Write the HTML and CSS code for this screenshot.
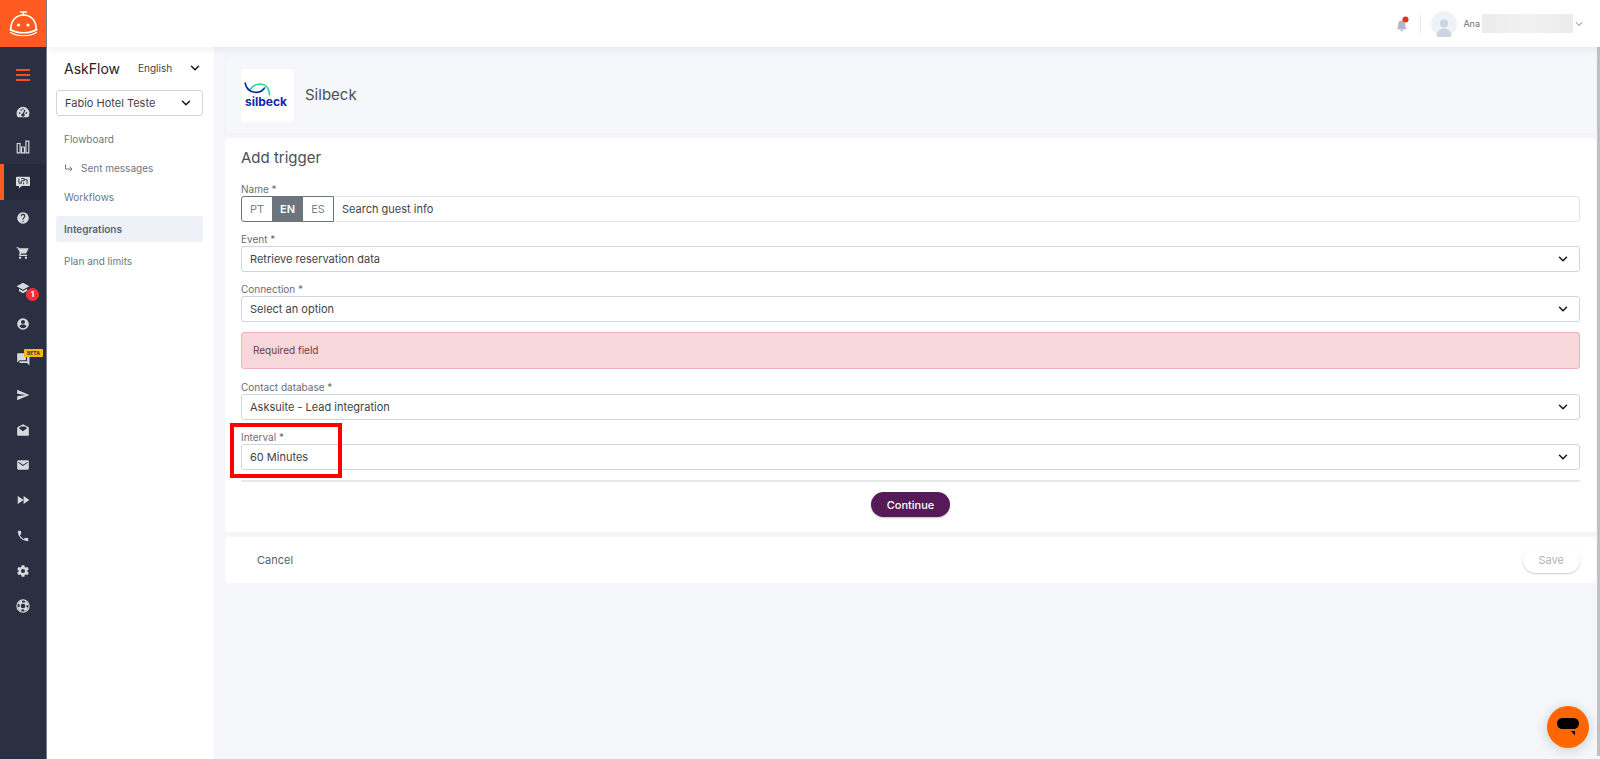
FILE: index.html
```
<!DOCTYPE html>
<html lang="en">

<head>
    <meta charset="UTF-8">
    <meta name="viewport" content="width=device-width, initial-scale=1.0">
    <title>AskFlow</title>
    <link rel="stylesheet" href="styles.css">
</head>

<body>
    <svg class="defs" aria-hidden="true">
        <symbol id="chevron" viewBox="0 0 10 10">
            <path d="M1.5 3.3L5 6.8l3.5-3.5" fill="none" stroke="currentColor" stroke-width="1.5" stroke-linecap="round" stroke-linejoin="round" />
        </symbol>
    </svg>

    <nav class="sidebar" aria-label="Main">
        <a class="brand" href="#" aria-label="Home">
            <svg width="29" height="28" viewBox="0 0 29 28" fill="none" stroke="#fff" stroke-width="1.6" stroke-linecap="round">
                <path d="M11.5 2h6M14.500 2v3" />
                <path d="M1.800 20C1.500 11.500 6.500 5 14.500 5S27.500 11.500 27.200 20" />
                <path d="M1.200 19.500C8 23.800 21 23.800 27.800 19.500" />
                <path d="M1.500 22.500C8 26.800 21 26.800 27.500 22.500" stroke-width="1.200" />
                <circle cx="9.500" cy="15" r="1.600" fill="#fff" stroke="none" />
                <circle cx="19" cy="15" r="1.600" fill="#fff" stroke="none" />
            </svg>
        </a>
        <button class="burger" type="button" aria-label="Menu"><i></i><i></i><i></i></button>
        <ul class="icons">
            <li><a href="#" aria-label="Dashboard"><svg viewBox="0 0 24 24"><path fill-rule="evenodd" d="M12 3A11 11 0 0 0 1 14c0 2.500.8 5 2.200 7h17.600c1.400-2 2.200-4.500 2.200-7A11 11 0 0 0 12 3zM5 12.500h2.500V15H5zM7.500 7.500H10V10H7.500zM11 5.500h2V8h-2zM16.500 12.500H19V15h-2.500zM14.500 7.500l1.800 1-2.500 6.200c1 .8 1.200 1.500 1.200 2.300a3 3 0 1 1-3-3z" /></svg></a></li>
            <li><a href="#" aria-label="Reports"><svg viewBox="0 0 24 24" fill="none" stroke="#d3dbde" stroke-width="2"><path d="M2 6h5v16H2zM9.500 12h5v10h-5zM17 2h5v20h-5z" /></svg></a></li>
            <li class="tall"><a class="on" href="#" aria-label="AskFlow"><svg viewBox="0 0 24 24"><path d="M2 3h20a2 2 0 0 1 2 2v12a2 2 0 0 1-2 2H10l-5 4v-4H2a2 2 0 0 1-2-2V5a2 2 0 0 1 2-2z" /><path d="M5 6v8h5M9 6h5v4H9v4M14 8h5v7M13 13v3" fill="none" stroke="#252a3a" stroke-width="1.500" /></svg></a></li>
            <li><a href="#" aria-label="Help"><svg viewBox="0 0 24 24"><path d="M12 2a10 10 0 1 0 0 20 10 10 0 0 0 0-20zm1 17h-2v-2h2zm2.070-7.750-.9.920C13.450 12.900 13 13.500 13 15h-2v-.5c0-1.100.450-2.100 1.170-2.830l1.240-1.260A2 2 0 1 0 10 9H8a4 4 0 1 1 7.070 2.250z" /></svg></a></li>
            <li><a href="#" aria-label="Cart"><svg viewBox="0 0 24 24"><path d="M7 18a2 2 0 1 0 0 4 2 2 0 0 0 0-4zM1 2v2h2l3.600 7.590-1.350 2.450C4.520 15.370 5.480 17 7 17h12v-2H7.420l1.130-2h7.450c.75 0 1.410-.41 1.750-1.030L21.700 4H5.210l-.94-2zm16 16a2 2 0 1 0 0 4 2 2 0 0 0 0-4z" /></svg></a></li>
            <li class="tall"><a href="#" aria-label="Academy"><svg viewBox="0 0 24 24"><path d="M5 13.180v4L12 21l7-3.820v-4L12 17zM12 3L1 9l11 6 11-6z" /></svg><span class="count">1</span></a></li>
            <li><a href="#" aria-label="Contacts"><svg viewBox="0 0 24 24"><path fill-rule="evenodd" d="M12 2a10 10 0 1 0 0 20 10 10 0 0 0 0-20zm0 3a3.500 3.500 0 1 1 0 7 3.500 3.500 0 0 1 0-7zm0 14.200a7.200 7.200 0 0 1-6-3.220c.03-1.990 4-3.080 6-3.080s5.970 1.090 6 3.080a7.200 7.200 0 0 1-6 3.220z" /></svg></a></li>
            <li class="tall"><a href="#" aria-label="Conversations"><svg viewBox="0 0 24 24"><path d="M21 7h-2v9H6v2c0 .55.45 1 1 1h12l4 4V8c0-.55-.45-1-2-1zm-4 6V3c0-.55-.45-1-1-1H3c-.55 0-1 .45-1 1v15l4-4h10c.55 0 1-.45 1-1z" /></svg><span class="beta">BETA</span></a></li>
            <li><a href="#" aria-label="Campaigns"><svg viewBox="0 0 24 24"><path d="M2 21l21-9L2 3v7l15 2-15 2z" /></svg></a></li>
            <li><a href="#" aria-label="Inbox"><svg viewBox="0 0 24 24"><path fill-rule="evenodd" d="M12 2l9 5a2 2 0 0 1 1 1.700V20a2 2 0 0 1-2 2H4a2 2 0 0 1-2-2V8.700A2 2 0 0 1 3 7zM5 9l7 5 7-5-3.500-3h-7z" /></svg></a></li>
            <li><a href="#" aria-label="Mail"><svg viewBox="0 0 24 24"><path fill-rule="evenodd" d="M4 4h16a2 2 0 0 1 2 2v12a2 2 0 0 1-2 2H4a2 2 0 0 1-2-2V6a2 2 0 0 1 2-2zm0 2.500V8l8 5.500L20 8V6.500l-8 5z" /></svg></a></li>
            <li class="tall"><a href="#" aria-label="Forward"><svg viewBox="0 0 24 24"><path d="M3 5l10 7-10 7zM13 5l10 7-10 7z" /></svg></a></li>
            <li><a href="#" aria-label="Calls"><svg viewBox="0 0 24 24"><path d="M6.620 10.790a15.100 15.100 0 0 0 6.590 6.590l2.200-2.200c.27-.27.67-.36 1.020-.24 1.120.37 2.330.57 3.570.57.55 0 1 .45 1 1V20c0 .55-.45 1-1 1A17 17 0 0 1 3 4c0-.55.45-1 1-1h3.500c.55 0 1 .45 1 1 0 1.250.2 2.450.57 3.570.11.35.03.74-.25 1.020z" /></svg></a></li>
            <li><a href="#" aria-label="Settings"><svg viewBox="0 0 24 24"><path d="M19.430 12.980c.04-.32.07-.64.07-.98s-.03-.66-.07-.98l2.110-1.650c.19-.15.24-.42.12-.64l-2-3.460c-.12-.22-.39-.3-.61-.22l-2.490 1c-.52-.4-1.080-.73-1.690-.98l-.38-2.650A.49.49 0 0 0 14 2h-4c-.25 0-.46.18-.49.42l-.38 2.650c-.61.25-1.170.59-1.690.98l-2.490-1c-.23-.09-.49 0-.61.22l-2 3.460c-.13.22-.07.49.12.64l2.110 1.650c-.04.32-.07.65-.07.98s.03.66.07.98l-2.110 1.650c-.19.15-.24.42-.12.64l2 3.460c.12.22.39.3.61.22l2.490-1c.52.4 1.080.73 1.690.98l.38 2.650c.03.24.24.42.49.42h4c.25 0 .46-.18.49-.42l.38-2.650c.61-.25 1.170-.59 1.690-.98l2.490 1c.23.09.49 0 .61-.22l2-3.460c.12-.22.07-.49-.12-.64zM12 15.500a3.500 3.500 0 1 1 0-7 3.500 3.500 0 0 1 0 7z" /></svg></a></li>
            <li class="tall"><a href="#" aria-label="Support"><svg viewBox="0 0 24 24" fill="none" stroke="#d3dbde"><circle cx="12" cy="12" r="10.500" stroke-width="2" /><circle cx="12" cy="12" r="7.500" stroke-width="4" stroke-dasharray="6.780 5" stroke-dashoffset="9.280" /><circle cx="12" cy="12" r="5" stroke-width="2" /></svg></a></li>
        </ul>
    </nav>

    <div class="page">
        <header class="topbar">
            <button class="bell" type="button" aria-label="Notifications">
                <svg width="14" height="16" viewBox="0 0 14 16">
                    <path d="M6 4.500h1.500c2 .5 2.800 2.200 2.800 4V11l1.200 1.500v.7H2v-.7L3.200 11V8.500c0-1.800.8-3.500 2.800-4zM5.300 13.700h3c0 2-3 2-3 0z" fill="#b5b5c9" />
                    <circle cx="10.500" cy="3.500" r="3" fill="#e63312" />
                </svg>
            </button>
            <span class="line"></span>
            <svg class="avatar" width="26" height="26" viewBox="0 0 26 26">
                <circle cx="13" cy="13" r="13" fill="#eff3f7" />
                <circle cx="13" cy="12.500" r="4" fill="#cbd5e2" />
                <path d="M5.500 25c.5-10 14.500-10 15 0a13 13 0 0 1-15 0z" fill="#cbd5e2" />
            </svg>
            <button class="user" type="button">Ana <span class="hidden-name"></span>
                <svg width="8" height="8"><use href="#chevron" /></svg>
            </button>
        </header>

        <div class="content">
            <aside class="menu">
                <div class="menu-top">
                    <strong class="menu-title">AskFlow</strong>
                    <div class="select lang">
                        <select aria-label="Language"><option>English</option></select>
                        <svg><use href="#chevron" /></svg>
                    </div>
                </div>
                <div class="select hotel">
                    <select aria-label="Hotel"><option>Fabio Hotel Teste</option></select>
                    <svg><use href="#chevron" /></svg>
                </div>
                <ul class="links">
                    <li><a href="#">Flowboard</a></li>
                    <li><a href="#"><svg width="9" height="9" viewBox="0 0 9 9" fill="none" stroke="#6b7885"><path d="M1.500.5v4.500H8M5.800 2.700L8 5 5.800 7.300" /></svg>Sent messages</a></li>
                    <li><a href="#">Workflows</a></li>
                    <li><a class="current" href="#">Integrations</a></li>
                    <li><a href="#">Plan and limits</a></li>
                </ul>
            </aside>

            <main class="main">
                <section class="card app">
                    <div class="app-logo">
                        <svg width="49" height="29" viewBox="-1 0 49 29" fill="none" stroke-linecap="round" role="img" aria-label="silbeck">
                            <path d="M6 8.500C12 .5 25 .5 25.500 14" stroke="#16e09a" stroke-width="1.600" />
                            <path d="M1.200 2C3 12.500 15.500 14 20.500 7" stroke="#1226ac" stroke-width="1.600" />
                            <text x="1" y="25" class="logo-text">silbeck</text>
                        </svg>
                    </div>
                    <h1>Silbeck</h1>
                </section>

                <form class="card trigger">
                    <h2>Add trigger</h2>

                    <div class="field">
                        <label for="name">Name *</label>
                        <div class="name-row">
                            <div class="langs">
                                <button type="button">PT</button>
                                <button class="active" type="button">EN</button>
                                <button type="button">ES</button>
                            </div>
                            <input id="name" type="text" value="Search guest info">
                        </div>
                    </div>

                    <div class="field">
                        <label for="event">Event *</label>
                        <div class="select">
                            <select id="event"><option>Retrieve reservation data</option></select>
                            <svg><use href="#chevron" /></svg>
                        </div>
                    </div>

                    <div class="field">
                        <label for="connection">Connection *</label>
                        <div class="select">
                            <select id="connection"><option>Select an option</option></select>
                            <svg><use href="#chevron" /></svg>
                        </div>
                    </div>

                    <div class="alert" role="alert">Required field</div>

                    <div class="field">
                        <label for="database">Contact database *</label>
                        <div class="select">
                            <select id="database"><option>Asksuite - Lead integration</option></select>
                            <svg><use href="#chevron" /></svg>
                        </div>
                    </div>

                    <div class="field marked">
                        <label for="interval">Interval *</label>
                        <div class="select">
                            <select id="interval"><option>60 Minutes</option></select>
                            <svg><use href="#chevron" /></svg>
                        </div>
                    </div>

                    <div class="submit">
                        <button class="continue" type="button">Continue</button>
                    </div>
                </form>

                <section class="card actions">
                    <button class="cancel" type="button">Cancel</button>
                    <button class="save" type="button" disabled>Save</button>
                </section>
            </main>
            <div class="scroll"></div>
        </div>
    </div>

    <button class="chat" type="button" aria-label="Chat">
        <svg width="22" height="18" viewBox="0 0 22 18"><rect width="22" height="11" rx="5.500" /><path d="M14 13h4v4.500z" /></svg>
    </button>
</body>

</html>
```

FILE: styles.css
```
*,
*::after {
    box-sizing: border-box;
}

body {
    display: flex;
    min-height: 100vh;
    margin: 0;
    font-family: Inter, "Liberation Sans", sans-serif;
    font-size: 11px;
    color: #3f4347;
    background-color: #f4f6fa;
}

ul {
    margin: 0;
    padding: 0;
    list-style: none;
}

a {
    color: inherit;
    text-decoration: none;
}

button,
input,
select {
    margin: 0;
    padding: 0;
    border: none;
    font: inherit;
    color: inherit;
    background: none;
}

h1,
h2 {
    margin: 0;
    font-size: 15px;
    font-weight: 400;
    line-height: 24px;
    color: #4b4f53;
}

.defs {
    position: absolute;
    width: 0;
    height: 0;
}

/* left bar */
.sidebar {
    flex: none;
    width: 46px;
    background-color: #2b2f42;
    box-shadow: 1px 0 0 #777b8c;
    z-index: 2;
}

.brand {
    display: flex;
    justify-content: center;
    align-items: center;
    height: 47px;
    background-color: #ff5a1f;
}

.burger {
    display: grid;
    gap: 3px;
    align-content: center;
    justify-content: center;
    width: 100%;
    height: 47px;
    padding-top: 9px;
}

.burger i {
    width: 14px;
    height: 2px;
    background-color: #f4511e;
}

.icons a {
    position: relative;
    display: flex;
    justify-content: center;
    align-items: center;
    height: 35px;
}

.icons .tall a {
    height: 36px;
}

.icons svg {
    width: 14px;
    height: 14px;
    fill: #d3dbde;
}

.icons svg[fill=none] {
    fill: none;
}

.icons .on {
    background-color: #252a3a;
    box-shadow: inset 4px 0 0 #ff5a1f;
}

.count {
    position: absolute;
    left: 26px;
    top: 18px;
    width: 13px;
    height: 13px;
    border-radius: 50%;
    font-size: 8px;
    font-weight: 700;
    line-height: 13px;
    text-align: center;
    color: #fff;
    background-color: #fb2c36;
}

.beta {
    position: absolute;
    left: 24px;
    top: 8px;
    width: 19px;
    height: 8px;
    border-radius: 1px;
    font-size: 5px;
    font-weight: 700;
    line-height: 8px;
    text-align: center;
    color: #2b2f42;
    background-color: #fbba08;
}

.page {
    display: flex;
    flex-direction: column;
    flex: 1;
    min-width: 0;
}

/* top bar */
.topbar {
    display: flex;
    justify-content: flex-end;
    align-items: center;
    height: 47px;
    padding-right: 17px;
    background-color: #fff;
    box-shadow: 0 2px 8px rgba(40, 50, 80, 0.08);
    z-index: 1;
}

.bell {
    height: 16px;
}

.bell svg {
    display: block;
}

.line {
    width: 1px;
    height: 18px;
    margin: 0 10px 0 11px;
    background-color: #e4e7ec;
}

.user {
    display: flex;
    align-items: center;
    gap: 2px;
    margin-left: 6px;
    font-size: 9px;
    color: #6b6f73;
}

.hidden-name {
    width: 91px;
    height: 19px;
    background: linear-gradient(90deg, #ececec, #f1f1f1 50%, #ececec);
}

.user svg {
    color: #a8b2bf;
}

.content {
    display: flex;
    flex: 1;
}

/* module menu */
.menu {
    flex: none;
    width: 168px;
    padding: 10px 11px 0 10px;
    background-color: #fff;
}

.menu-top {
    display: flex;
    justify-content: space-between;
    align-items: center;
    height: 22px;
    margin-bottom: 11px;
    padding-left: 8px;
}

.menu-title {
    font-size: 14px;
    font-weight: 400;
    color: #1e2125;
}

.links a {
    display: flex;
    align-items: center;
    height: 26px;
    margin-bottom: 3px;
    padding-left: 8px;
    border-radius: 2px;
    font-size: 10px;
    color: #6b7885;
}

.links {
    padding-top: 10px;
}

.links svg {
    margin-right: 8px;
}

.links .current {
    margin: 6px 0;
    font-weight: 600;
    color: #58656f;
    background-color: #eef2f8;
}

/* drop-downs: the arrow shares the grid cell of the select */
.select {
    display: grid;
    align-items: center;
}

.select select {
    grid-area: 1 / 1;
    width: 100%;
    height: 26px;
    padding: 0 30px 0 8px;
    border: 1px solid #cfd6de;
    border-radius: 3px;
    appearance: none;
    background-color: #fff;
}

.select svg {
    grid-area: 1 / 1;
    justify-self: end;
    width: 10px;
    height: 10px;
    margin-right: 12px;
    color: #101828;
    pointer-events: none;
}

.lang {
    width: 65px;
    font-size: 10px;
}

.lang select {
    height: 22px;
    padding: 0;
    border: none;
}

.lang svg {
    margin-right: 3px;
}

/* work area */
.main {
    flex: 1;
    min-width: 0;
    padding: 10px 1px 0 11px;
}

.scroll {
    flex: none;
    width: 3px;
    margin-bottom: 3px;
    background-color: #c1c1c3;
}

.card {
    border-radius: 4px;
    background-color: #fff;
}

.app {
    display: flex;
    align-items: center;
    gap: 11px;
    height: 76px;
    margin-bottom: 5px;
    padding: 0 16px;
    background-color: #f5f7fb;
    box-shadow: 0 0 3px rgba(60, 80, 120, 0.04);
}

.app-logo {
    display: flex;
    justify-content: center;
    align-items: center;
    width: 53px;
    height: 53px;
    border-radius: 4px;
    background-color: #fff;
}

.logo-text {
    font-family: Inter, sans-serif;
    font-size: 12px;
    font-weight: 700;
    fill: #1226ac;
}

.trigger {
    margin-bottom: 5px;
    padding: 8px 16px 15px;
}

.trigger h2 {
    margin-bottom: 12px;
}

.field {
    position: relative;
    margin-bottom: 10px;
}

.field label {
    display: block;
    font-size: 10px;
    line-height: 14px;
    color: #6a6e73;
}

.name-row {
    display: flex;
    height: 26px;
}

.name-row input {
    flex: 1;
    min-width: 0;
    padding: 0 8px;
    border: 1px solid #e2e6ea;
    border-left: none;
    border-radius: 0 4px 4px 0;
}

.langs {
    display: flex;
    border: 1px solid #6c757d;
    border-radius: 3px 0 0 3px;
    overflow: hidden;
}

.langs button {
    width: 30px;
    color: #7b838a;
}

.langs .active {
    width: 31px;
    font-weight: 600;
    color: #fff;
    background-color: #6c757d;
}

.alert {
    margin-bottom: 11px;
    padding: 11px;
    border: 1px solid #f1b3bb;
    border-radius: 3px;
    font-size: 10px;
    line-height: 13px;
    color: #6d3a42;
    background-color: #f7d7da;
}

.marked::after {
    content: "";
    position: absolute;
    left: -11px;
    top: -7px;
    width: 112px;
    height: 55px;
    border: 4px solid #fe0000;
    pointer-events: none;
}

.submit {
    padding-top: 10px;
    border-top: 2px solid #e7e8ea;
    text-align: center;
}

.continue {
    height: 25px;
    padding: 0 16px;
    border-radius: 13px;
    font-weight: 500;
    color: #fff;
    background-color: #561a58;
    box-shadow: 0 1px 2px rgba(0, 0, 0, 0.25);
}

.actions {
    display: flex;
    justify-content: space-between;
    align-items: center;
    height: 46px;
    padding: 0 16px;
}

.cancel {
    padding: 0 16px;
    color: #5b5f63;
}

.save {
    height: 26px;
    padding: 0 16px;
    border-radius: 13px;
    color: #b4b4b4;
    box-shadow: 0 1px 2px rgba(0, 0, 0, 0.2);
}

.chat {
    position: fixed;
    right: 11px;
    bottom: 11px;
    display: flex;
    justify-content: center;
    align-items: center;
    width: 42px;
    height: 42px;
    border-radius: 50%;
    background-color: #ff6600;
    box-shadow: 0 2px 12px rgba(0, 60, 60, 0.2);
    z-index: 3;
}
```
